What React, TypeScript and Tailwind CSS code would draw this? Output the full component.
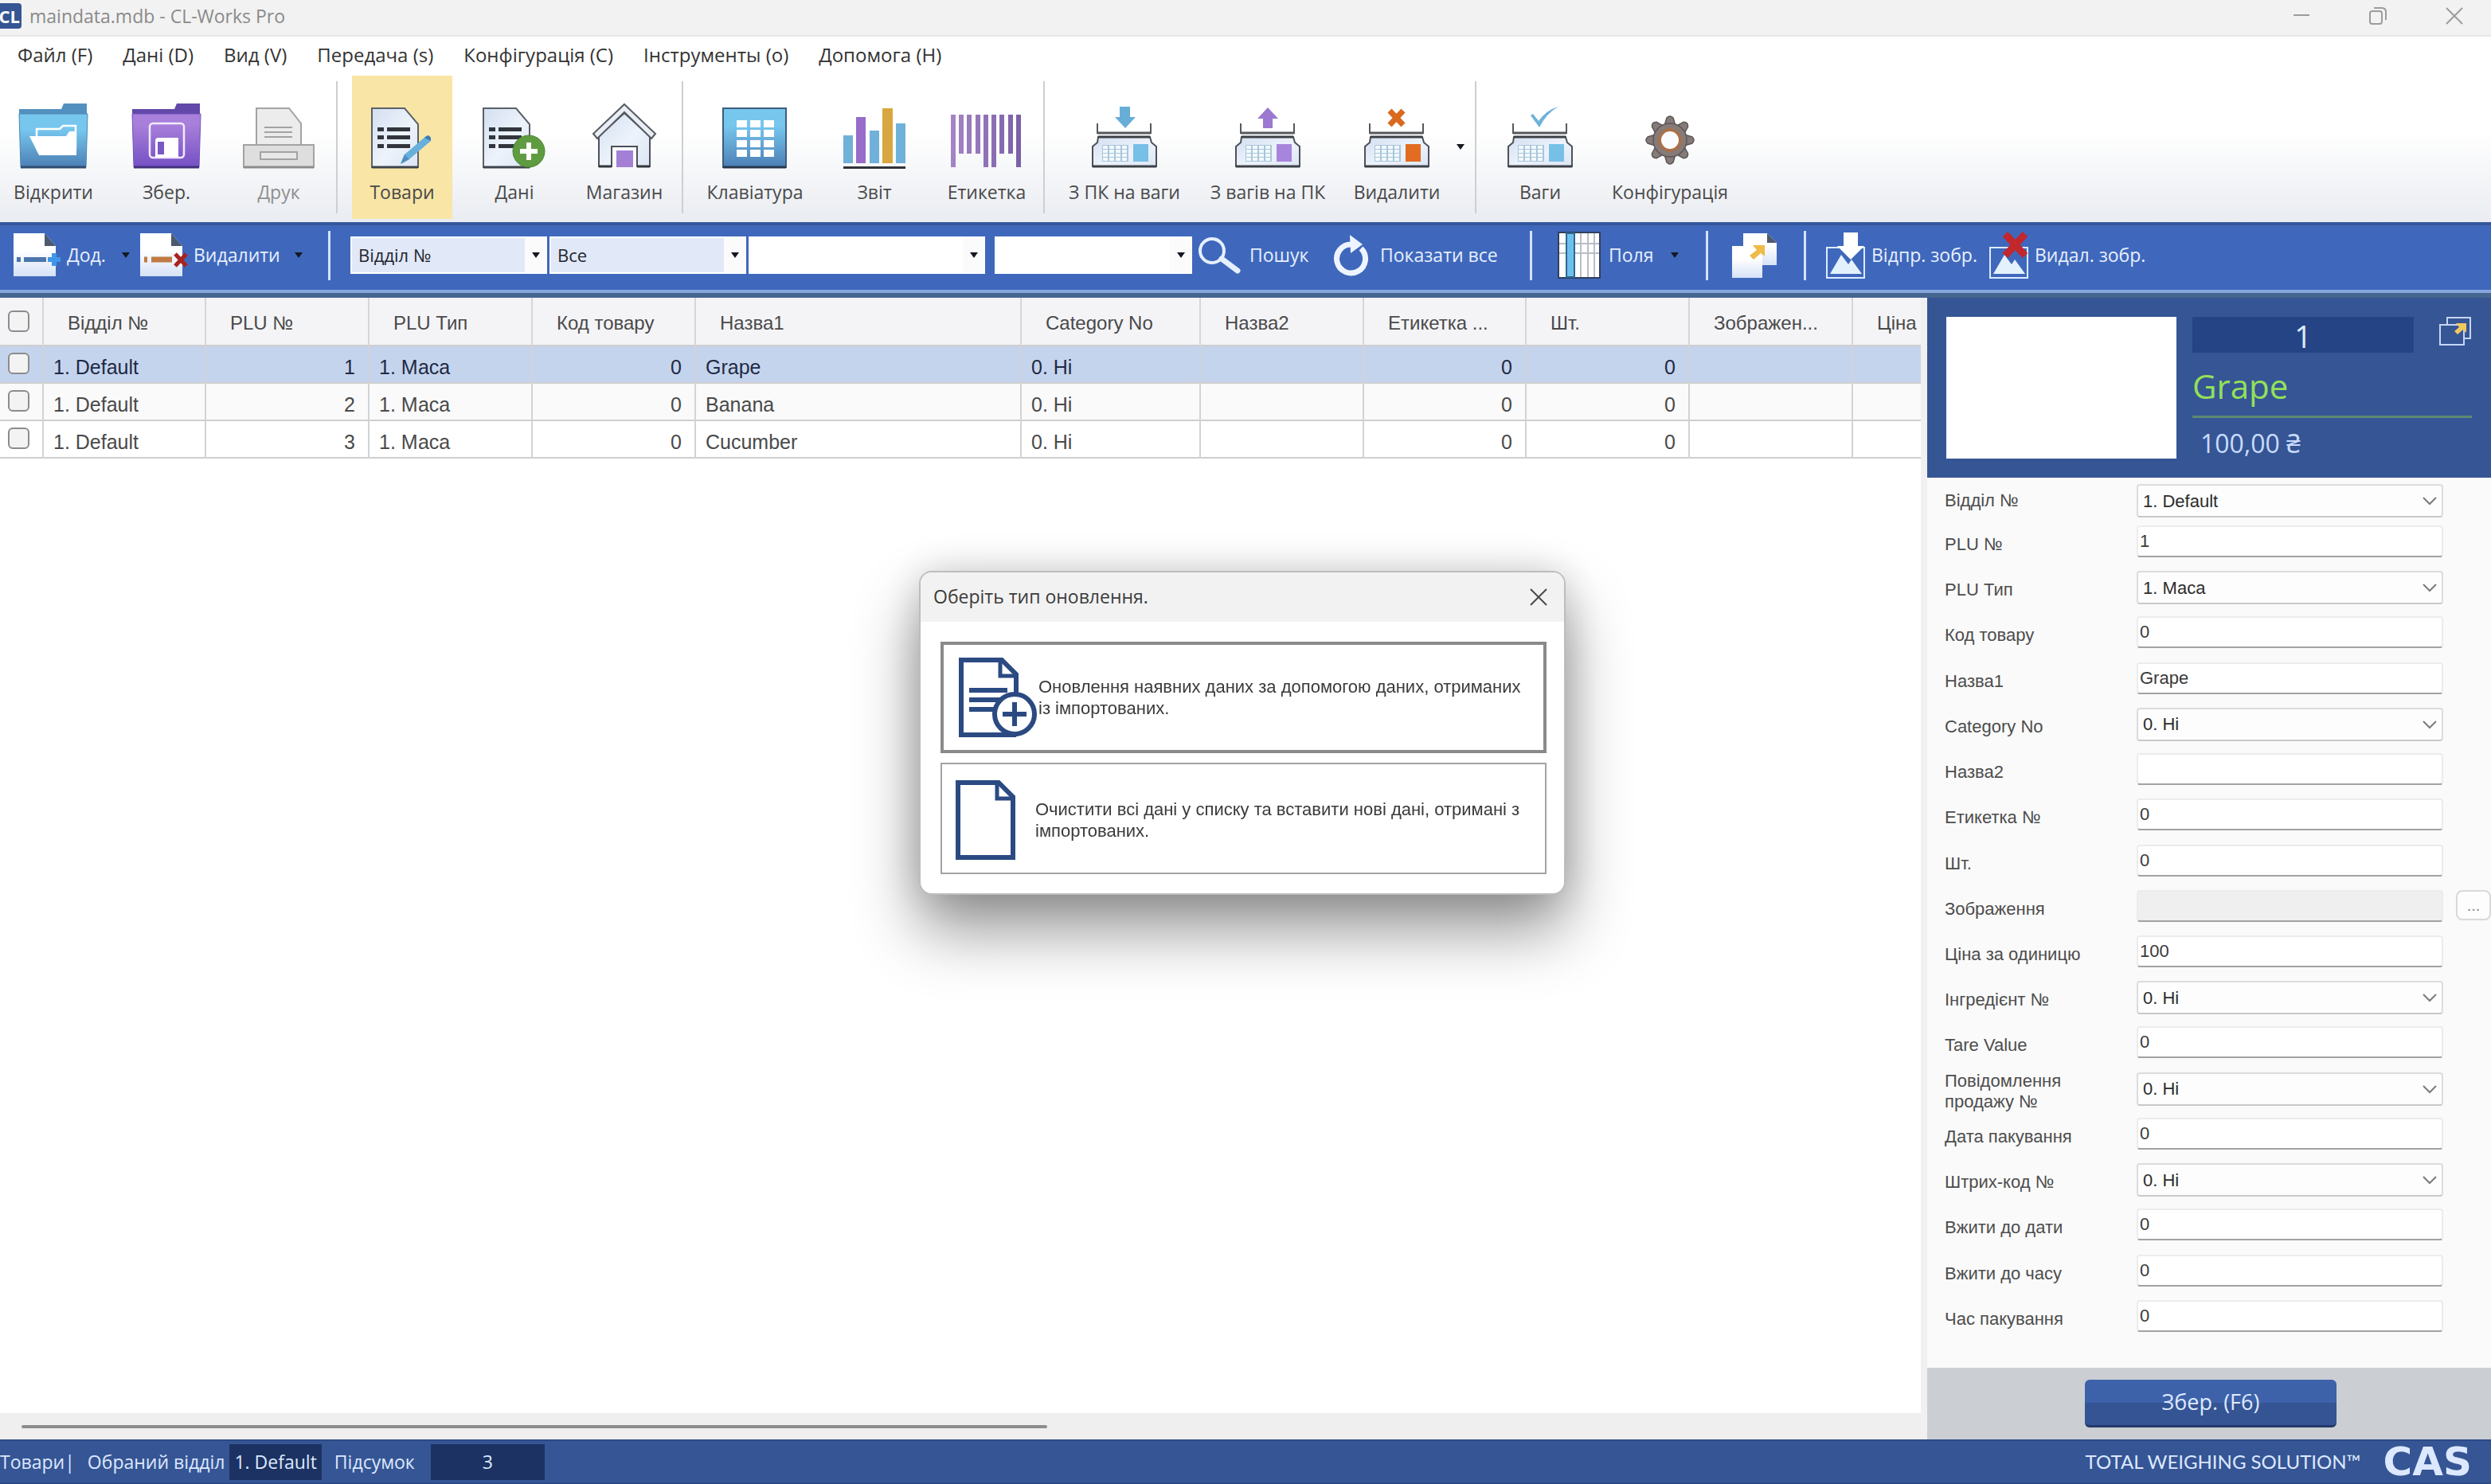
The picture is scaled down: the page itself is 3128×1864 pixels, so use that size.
import React from "react";

const UI = "font-['Open_Sans','Noto_Sans',sans-serif]";
const SANS = "font-['Liberation_Sans',Arial,sans-serif]";

/* ---------- toolbar icons ---------- */

function Gradients() {
  return (
    <svg className="absolute size-0" aria-hidden="true">
      <defs>
        <linearGradient id="blue" x1="0" y1="0" x2="0" y2="1">
          <stop offset="0.3" stopColor="#76c6ee" />
          <stop offset="1" stopColor="#4c7fb5" />
        </linearGradient>
        <linearGradient id="purple" x1="0" y1="0" x2="0" y2="1">
          <stop offset="0.2" stopColor="#a87fdb" />
          <stop offset="1" stopColor="#7450c4" />
        </linearGradient>
        <linearGradient id="paper" x1="0" y1="0" x2="1" y2="1">
          <stop offset="0" stopColor="#d3dff0" />
          <stop offset="0.55" stopColor="#edf3fb" />
          <stop offset="1" stopColor="#dbe5f3" />
        </linearGradient>
        <linearGradient id="bars" x1="0" y1="0" x2="1" y2="0">
          <stop offset="0" stopColor="#a585c4" />
          <stop offset="1" stopColor="#7b5fa8" />
        </linearGradient>
        <linearGradient id="sheet" x1="0" y1="0" x2="0" y2="1">
          <stop offset="0.4" stopColor="#ffffff" />
          <stop offset="1" stopColor="#d6e2f7" />
        </linearGradient>
      </defs>
    </svg>
  );
}

const OpenIcon = () => (
  <svg width="88" height="84" viewBox="0 0 88 84">
    <path d="M1 8H54L57 1H86V20H1Z" fill="#5291bf" />
    <path d="M1 14H87L85 81H3Z" fill="url(#blue)" stroke="#4a87b5" strokeWidth="1" />
    <path d="M3 81H85" stroke="#2f4c70" strokeWidth="3" />
    <path d="M23 42V33H52L56 29H72V58" fill="none" stroke="#fff" strokeWidth="2.5" />
    <path d="M14 42H60L64 36H73V66H26Z" fill="#fff" />
  </svg>
);

const SaveIcon = () => (
  <svg width="88" height="84" viewBox="0 0 88 84">
    <path d="M1 8H54L57 1H86V20H1Z" fill="#6248a8" />
    <path d="M1 14H87L85 81H3Z" fill="url(#purple)" stroke="#7355b8" strokeWidth="1" />
    <path d="M3 81H85" stroke="#43307c" strokeWidth="3" />
    <rect x="23" y="26" width="43" height="43" rx="4" fill="none" stroke="#f2eaff" strokeWidth="2.5" />
    <path d="M30 48Q30 44 34 44H59V68H30Z" fill="#fff" />
    <rect x="33" y="49" width="8" height="16" fill="#7a58c4" />
  </svg>
);

const PrintIcon = () => (
  <svg width="90" height="78" viewBox="0 0 90 78" stroke="#a3a3a3" strokeWidth="2">
    <path d="M17 48V1H58L73 20V48Z" fill="#ececec" />
    <path d="M27 25H62M27 31H62M27 37H62" />
    <rect x="1" y="47" width="88" height="28" fill="#dedede" />
    <path d="M1 75H89" stroke="#8c8c8c" strokeWidth="3" />
    <rect x="22" y="56" width="46" height="9" fill="#e8e8e8" />
  </svg>
);

function DocLines() {
  return (
    <>
      <path d="M1 2H42L59 22V76H1Z" fill="url(#paper)" stroke="#5b6068" strokeWidth="2" />
      <path d="M1 76H59" stroke="#3f444b" strokeWidth="3" />
      <g fill="#32363c">
        <rect x="8" y="26" width="8" height="5" />
        <rect x="20" y="26" width="29" height="5" />
        <rect x="8" y="36" width="8" height="5" />
        <rect x="20" y="36" width="29" height="5" />
        <rect x="8" y="47" width="8" height="5" />
        <rect x="20" y="47" width="29" height="5" />
      </g>
    </>
  );
}

const GoodsIcon = () => (
  <svg width="72" height="79" viewBox="0 0 78 79" className="w-[78px]">
    <DocLines />
    <path d="M37 72L42 60L69 37L75 43L48 66Z" fill="#67b0dc" />
    <path d="M42 60L48 66L37 72Z" fill="#4e8fc0" />
    <path d="M67 39L71 36Q76 37 75 43Z" fill="#3c7db0" />
  </svg>
);

const DataIcon = () => (
  <svg width="80" height="79" viewBox="0 0 80 79">
    <DocLines />
    <circle cx="58" cy="56" r="20" fill="#5f9c41" stroke="#4c8532" strokeWidth="1" />
    <path d="M58 45V67M47 56H69" stroke="#fff" strokeWidth="6" />
  </svg>
);

const StoreIcon = () => (
  <svg width="82" height="84" viewBox="0 0 82 84">
    <path d="M9 42V80H25V55H57V80H73V42L41 13Z" fill="url(#paper)" stroke="#4d5158" strokeWidth="2" />
    <path d="M9 80H25M57 80H73" stroke="#33363b" strokeWidth="3" />
    <path d="M41 2L80 39L75 45L41 12L7 45L2 39Z" fill="#e9eef6" stroke="#555960" strokeWidth="2" />
    <rect x="31" y="60" width="21" height="21" fill="#a380d6" />
  </svg>
);

const KeypadIcon = () => (
  <svg width="82" height="78" viewBox="0 0 82 78">
    <rect x="1" y="1" width="79" height="74" fill="url(#blue)" stroke="#3d5d7c" strokeWidth="2" />
    <path d="M1 75H80" stroke="#26384e" strokeWidth="3" />
    <g fill="#fff">
      {[16, 28, 41, 53].map((y) =>
        [18, 35, 52].map((x) => <rect key={x + "-" + y} x={x} y={y} width="13" height="9" />)
      )}
    </g>
  </svg>
);

const ReportIcon = () => (
  <svg width="80" height="78" viewBox="0 0 80 78">
    <rect x="1" y="35" width="12" height="35" fill="#6fb1d8" />
    <rect x="17" y="12" width="12" height="58" fill="#976dc9" />
    <rect x="34" y="29" width="12" height="41" fill="#6fb1d8" />
    <rect x="50" y="1" width="13" height="69" fill="#d9a740" />
    <rect x="67" y="20" width="12" height="50" fill="#6fb1d8" />
    <rect x="1" y="74" width="78" height="3" fill="#303338" />
  </svg>
);

const LabelIcon = () => (
  <svg width="90" height="70" viewBox="0 0 90 70">
    <path
      d="M0 1h6v66H0ZM10 1h6v49h-6ZM20 1h6v49h-6ZM31 1h6v49h-6ZM41 1h6v66h-6ZM51 1h6v66h-6ZM61 1h6v49h-6ZM72 1h6v49h-6ZM82 1h6v66h-6Z"
      fill="url(#bars)"
    />
  </svg>
);

function ScaleIcon({ accent, children }: { accent: string; children: React.ReactNode }) {
  return (
    <svg width="84" height="80" viewBox="0 0 84 80">
      {children}
      <path d="M8 22V34H75V22" fill="none" stroke="#55585d" strokeWidth="2" />
      <path d="M8 34H75" stroke="#55585d" strokeWidth="3" />
      <path d="M9 39H74L76 46L82 51V76H2V51L8 46Z" fill="url(#paper)" stroke="#4e5258" strokeWidth="2" />
      <path d="M9 39H74M2 76H82" stroke="#3c4046" strokeWidth="3" />
      <rect x="14" y="49" width="33" height="21" fill="#a9c6da" />
      <g fill="#f2f9fd">
        {[50, 55, 60, 65].map((y) =>
          [15, 23, 31, 39].map((x) => <rect key={x + "-" + y} x={x} y={y} width="6" height="4" />)
        )}
      </g>
      <rect x="53" y="48" width="19" height="22" fill={accent} />
    </svg>
  );
}

const ToScale = () => (
  <ScaleIcon accent="#76bfe6">
    <path d="M36 1H49V14H56L43 28L30 14H36Z" fill="#66aed7" />
  </ScaleIcon>
);
const FromScale = () => (
  <ScaleIcon accent="#a885dc">
    <path d="M36 28H48V16H55L42 2L29 16H36Z" fill="#9c78d0" />
  </ScaleIcon>
);
const ClearScale = () => (
  <ScaleIcon accent="#e26c22">
    <path d="M33 6L50 24M50 6L33 24" stroke="#d9691f" strokeWidth="7" />
  </ScaleIcon>
);
const CheckScale = () => (
  <ScaleIcon accent="#76c0e8">
    <path d="M30 12L41 27Q50 9 65 1Q50 5 40 19L33 10Z" fill="#6db2da" />
  </ScaleIcon>
);

const GearIcon = () => (
  <svg width="64" height="62" viewBox="0 0 64 62">
    <g fill="#857b78" stroke="#5d5755" strokeWidth="1.5">
      {[0, 45, 90, 135, 180, 225, 270, 315].map((a) => (
        <path key={a} d="M25 13L28 3Q32 -1 36 3L39 13Z" transform={`rotate(${a} 32 31)`} />
      ))}
      <circle cx="32" cy="31" r="21" />
    </g>
    <circle cx="32" cy="31" r="20" fill="#857b78" />
    <circle cx="32" cy="31" r="13" fill="#fafbfc" stroke="#a7714c" strokeWidth="4" />
  </svg>
);

/* ---------- action bar icons ---------- */

const AddRow = () => (
  <svg width="64" height="60" viewBox="0 0 64 60">
    <path d="M1 2H40L54 18V56H1Z" fill="url(#sheet)" />
    <path d="M40 2L54 18H40Z" fill="#4c5a70" />
    <path d="M5 35H10M14 35H42" stroke="#4c76ad" strokeWidth="6" />
    <path d="M52 27V43M44 35H60" stroke="#3f97e8" strokeWidth="6" />
  </svg>
);

const DeleteRow = () => (
  <svg width="64" height="60" viewBox="0 0 64 60">
    <path d="M1 2H40L54 18V56H1Z" fill="url(#sheet)" />
    <path d="M40 2L54 18H40Z" fill="#4c5a70" />
    <path d="M6 35H10M15 35H41" stroke="#c07a45" strokeWidth="7" />
    <path d="M45 28L59 43M59 28L45 43" stroke="#a8231e" strokeWidth="5" />
  </svg>
);

const SearchIcon = () => (
  <svg width="56" height="48" viewBox="0 0 56 48" fill="none" stroke="#e6efff">
    <circle cx="19" cy="18" r="15" strokeWidth="4" />
    <path d="M31 28L51 43" strokeWidth="7" strokeLinecap="round" />
  </svg>
);

const RefreshIcon = () => (
  <svg width="48" height="54" viewBox="0 0 48 54">
    <path d="M36 18A18 18 0 1 1 24 13" fill="none" stroke="#eef4ff" strokeWidth="7" />
    <path d="M22 1L38 13L23 24Z" fill="#eef4ff" />
  </svg>
);

const FieldsIcon = () => (
  <svg width="54" height="60" viewBox="0 0 54 60">
    <rect x="1" y="1" width="52" height="57" fill="#fff" stroke="#2f3f5c" strokeWidth="2" />
    <path d="M2 15H52M2 27H52M29 2V57M38 2V57M46 2V57" stroke="#b9bec6" strokeWidth="2" />
    <rect x="11" y="2" width="10" height="55" fill="#6dc0ec" stroke="#2e6690" strokeWidth="2" />
  </svg>
);

const PopoutIcon = () => (
  <svg width="60" height="60" viewBox="0 0 60 60">
    <path d="M16 2H46L58 14V42H16Z" fill="url(#sheet)" />
    <path d="M46 2L58 14H46Z" fill="#50596a" />
    <path d="M2 18H40V58H2Z" fill="url(#sheet)" />
    <path d="M24 30L33 23L28 17H43V31L38 27L29 35Z" fill="#edbb48" />
  </svg>
);

const Picture = () => (
  <>
    <rect x="2" y="21" width="47" height="38" fill="none" stroke="#dcecff" strokeWidth="2" />
    <path d="M6 54L20 30L29 42L33 36L46 54Z" fill="#e3f1fc" />
  </>
);

const SendImage = () => (
  <svg width="52" height="61" viewBox="0 0 52 61">
    <Picture />
    <path d="M23 2H41V19H49L32 36L15 19H23Z" fill="#fff" />
  </svg>
);

const DropImage = () => (
  <svg width="52" height="61" viewBox="0 0 52 61">
    <Picture />
    <path d="M21 4L46 31M46 4L21 31" stroke="#c3262b" strokeWidth="9" />
  </svg>
);

const Caret = () => (
  <svg width="10" height="7" viewBox="0 0 10 7" className="shrink-0">
    <path d="M0 0H10L5 7Z" fill="#14181f" />
  </svg>
);

/* ---------- ribbon ---------- */

function Tool({
  icon,
  label,
  width,
  muted,
  active,
}: {
  icon: React.ReactNode;
  label: string;
  width: string;
  muted?: boolean;
  active?: boolean;
}) {
  return (
    <button
      type="button"
      disabled={muted}
      className={
        "flex h-[180px] shrink-0 flex-col items-center justify-end gap-3 pb-[18px] " +
        width +
        (active ? " bg-[#f9e5a6]" : "")
      }
    >
      {icon}
      <span className={"text-[23px] leading-8 whitespace-nowrap " + (muted ? "text-[#8f8f8f]" : "text-[#4a4a4a]")}>
        {label}
      </span>
    </button>
  );
}

const RibbonRule = ({ gap }: { gap: string }) => <div className={"h-[166px] w-[2px] shrink-0 bg-[#cfcfd1] " + gap} />;

function Ribbon() {
  return (
    <div className="flex h-[187px] shrink-0 items-center bg-linear-to-b from-white from-40% to-[#e9ecf1] pb-0.5">
      <Tool icon={<OpenIcon />} label="Відкрити" width="w-[134px]" />
      <Tool icon={<SaveIcon />} label="Збер." width="w-[150px]" />
      <Tool icon={<PrintIcon />} label="Друк" width="w-[132px]" muted />
      <RibbonRule gap="ml-1.5 mr-[18px]" />
      <Tool icon={<GoodsIcon />} label="Товари" width="w-[126px]" active />
      <div className="w-1.5 shrink-0" />
      <Tool icon={<DataIcon />} label="Дані" width="w-[144px]" />
      <Tool icon={<StoreIcon />} label="Магазин" width="w-[132px]" />
      <RibbonRule gap="ml-1.5 mr-2.5" />
      <Tool icon={<KeypadIcon />} label="Клавіатура" width="w-[160px]" />
      <Tool icon={<ReportIcon />} label="Звіт" width="w-[140px]" />
      <Tool icon={<LabelIcon />} label="Етикетка" width="w-[142px]" />
      <RibbonRule gap="mr-2.5" />
      <Tool icon={<ToScale />} label="З ПК на ваги" width="w-[180px]" />
      <Tool icon={<FromScale />} label="З вагів на ПК" width="w-[180px]" />
      <Tool icon={<ClearScale />} label="Видалити" width="w-[144px]" />
      <button type="button" aria-label="Видалити: інші дії" className="flex h-10 w-4 items-center justify-center">
        <Caret />
      </button>
      <RibbonRule gap="mx-2.5" />
      <Tool icon={<CheckScale />} label="Ваги" width="w-[140px]" />
      <Tool
        icon={
          <span className="pb-1.5">
            <GearIcon />
          </span>
        }
        label="Конфігурація"
        width="w-[186px]"
      />
    </div>
  );
}

/* ---------- action bar ---------- */

function BarButton({
  icon,
  label,
  caret,
  className,
}: {
  icon: React.ReactNode;
  label: string;
  caret?: boolean;
  className: string;
}) {
  return (
    <button
      type="button"
      className={"flex h-16 shrink-0 items-center text-[23px] whitespace-nowrap text-[#e8efff] " + className}
    >
      {icon}
      <span>{label}</span>
      {caret && (
        <span className="ml-auto pr-0.5">
          <Caret />
        </span>
      )}
    </button>
  );
}

function BarSelect({ label, value, className }: { label: string; value?: string; className: string }) {
  return (
    <div className={"relative h-[47px] shrink-0 " + className}>
      <select
        aria-label={label}
        className={
          "h-full w-full appearance-none border-2 border-white pl-2 text-[22px] text-[#22262e] " +
          (value ? "bg-[#e1e8f7]" : "bg-white")
        }
      >
        <option>{value ?? ""}</option>
      </select>
      <span className="pointer-events-none absolute inset-y-0.5 right-0 flex w-7 items-center justify-center bg-[#fbfbfb]">
        <Caret />
      </span>
    </div>
  );
}

const BarRule = ({ gap }: { gap: string }) => <div className={"h-[62px] w-[3px] shrink-0 bg-[#d5e1fa] " + gap} />;

function ActionBar() {
  return (
    <div className="shrink-0 border-t-4 border-b-6 border-t-[#35579b] border-b-[#46658f]">
      <div className="flex h-[85px] items-center border-b-4 border-[#86a6de] bg-[#3f68bc] pb-1.5 pl-4">
        <BarButton icon={<AddRow />} label="Дод." caret className="w-[149px] gap-1" />
        <BarButton icon={<DeleteRow />} label="Видалити" caret className="ml-2.5 w-[207px] gap-1" />
        <BarRule gap="ml-[30px] mr-[25px]" />
        <BarSelect label="Поле пошуку" value="Відділ №" className="w-[247px]" />
        <BarSelect label="Значення" value="Все" className="ml-[3px] w-[247px]" />
        <BarSelect label="Умова" className="ml-[3px] w-[297px]" />
        <BarSelect label="Шуканий текст" className="ml-3 w-[248px]" />
        <BarButton icon={<SearchIcon />} label="Пошук" className="ml-[6px] w-[170px] gap-2.5" />
        <BarButton icon={<RefreshIcon />} label="Показати все" className="w-[228px] gap-3" />
        <BarRule gap="ml-5 mr-8" />
        <BarButton icon={<FieldsIcon />} label="Поля" caret className="w-[154px] gap-2.5" />
        <BarRule gap="mx-8" />
        <button type="button" aria-label="Відкрити в окремому вікні" className="-ml-1 shrink-0">
          <PopoutIcon />
        </button>
        <BarRule gap="ml-8 mr-6" />
        <BarButton icon={<SendImage />} label="Відпр. зобр." className="w-[205px] gap-1.5" />
        <BarButton icon={<DropImage />} label="Видал. зобр." className="gap-1.5" />
      </div>
    </div>
  );
}

/* ---------- product table ---------- */

const COLUMNS = [
  { title: "Відділ №", width: "w-[204px]" },
  { title: "PLU №", width: "w-[205px]" },
  { title: "PLU Тип", width: "w-[205px]" },
  { title: "Код товару", width: "w-[205px]" },
  { title: "Назва1", width: "w-[409px]" },
  { title: "Category No", width: "w-[225px]" },
  { title: "Назва2", width: "w-[205px]" },
  { title: "Етикетка ...", width: "w-[204px]" },
  { title: "Шт.", width: "w-[205px]" },
  { title: "Зображен...", width: "w-[205px]" },
  { title: "Ціна", width: "w-[205px]" },
];

const NUMERIC = [1, 3, 7, 8];

const ROWS = [
  ["1. Default", "1", "1. Маса", "0", "Grape", "0. Ні", "", "0", "0", "", ""],
  ["1. Default", "2", "1. Маса", "0", "Banana", "0. Ні", "", "0", "0", "", ""],
  ["1. Default", "3", "1. Маса", "0", "Cucumber", "0. Ні", "", "0", "0", "", ""],
];

const Tick = ({ label }: { label: string }) => (
  <input
    type="checkbox"
    aria-label={label}
    className="ml-2.5 block size-[27px] appearance-none rounded-md border-2 border-[#8c8c8c] bg-[#f3f3f3]"
  />
);

function ProductTable() {
  return (
    <div className={"min-h-0 flex-1 overflow-hidden bg-white " + SANS}>
      <table className="w-[2531px] table-fixed border-collapse text-[24px] text-[#4a4a4a]">
        <thead>
          <tr className="h-[60px] border-b-2 border-[#cfcfcf] bg-[#f4f4f7]">
            <th className="w-[54px] border-r-2 border-[#d6d6d6] p-0">
              <Tick label="Вибрати все" />
            </th>
            {COLUMNS.map((c) => (
              <th
                key={c.title}
                className={"border-r-2 border-[#d6d6d6] p-0 pt-1 pl-[30px] text-left font-normal whitespace-nowrap " + c.width}
              >
                {c.title}
              </th>
            ))}
          </tr>
        </thead>
        <tbody className="text-[25px]">
          {ROWS.map((row, r) => (
            <tr
              key={r}
              className={
                "h-[47px] border-b-2 border-[#cfcfcf] " +
                (r === 0 ? "bg-[#c5d4ed] text-[#1f2a44]" : r === 1 ? "bg-[#fafafa]" : "bg-white")
              }
            >
              <td className="border-r-2 border-[#d0d3d8] p-0 pb-0.5">
                <Tick label={"Вибрати " + row[4]} />
              </td>
              {row.map((cell, i) => (
                <td
                  key={i}
                  className={
                    "border-r-2 border-[#d0d3d8] pt-1.5 pr-4 pb-0 pl-3 leading-9 " +
                    (NUMERIC.includes(i) ? "text-right" : "text-left")
                  }
                >
                  {cell}
                </td>
              ))}
            </tr>
          ))}
        </tbody>
      </table>
    </div>
  );
}

/* ---------- product card ---------- */

type Field = { label: string; value: string; kind: "select" | "text" | "file" };

const FIELDS: Field[] = [
  { label: "Відділ №", value: "1. Default", kind: "select" },
  { label: "PLU №", value: "1", kind: "text" },
  { label: "PLU Тип", value: "1. Маса", kind: "select" },
  { label: "Код товару", value: "0", kind: "text" },
  { label: "Назва1", value: "Grape", kind: "text" },
  { label: "Category No", value: "0. Ні", kind: "select" },
  { label: "Назва2", value: "", kind: "text" },
  { label: "Етикетка №", value: "0", kind: "text" },
  { label: "Шт.", value: "0", kind: "text" },
  { label: "Зображення", value: "", kind: "file" },
  { label: "Ціна за одиницю", value: "100", kind: "text" },
  { label: "Інгредієнт №", value: "0. Ні", kind: "select" },
  { label: "Tare Value", value: "0", kind: "text" },
  { label: "Повідомлення продажу №", value: "0. Ні", kind: "select" },
  { label: "Дата пакування", value: "0", kind: "text" },
  { label: "Штрих-код №", value: "0. Ні", kind: "select" },
  { label: "Вжити до дати", value: "0", kind: "text" },
  { label: "Вжити до часу", value: "0", kind: "text" },
  { label: "Час пакування", value: "0", kind: "text" },
];

function FieldRow({ field, index }: { field: Field; index: number }) {
  const id = "field-" + index;
  return (
    <div className={"flex items-start " + (index === 0 ? "h-[52px] shrink-0" : "flex-1")}>
      <label
        htmlFor={id}
        className={
          "flex w-[241px] shrink-0 items-center pr-16 text-[22px] leading-[26px] text-[#4d4d4d] " +
          (index === 0 ? "h-[42px]" : "h-[48px]")
        }
      >
        {field.label}
      </label>
      {field.kind === "select" ? (
        <div className="relative h-[42px] min-w-0 flex-1">
          <select
            id={id}
            className="h-full w-full appearance-none rounded-sm border-2 border-[#dcdcdc] border-b-[#c9c9c9] bg-[#fdfdfd] pl-1.5 text-[22px] text-[#2c2c2c]"
          >
            <option>{field.value}</option>
          </select>
          <svg width="18" height="11" viewBox="0 0 18 11" className="pointer-events-none absolute top-4 right-2">
            <path d="M1 1L9 9L17 1" fill="none" stroke="#7b7b7b" strokeWidth="2" />
          </svg>
        </div>
      ) : (
        <input
          id={id}
          type="text"
          defaultValue={field.value}
          readOnly={field.kind === "file"}
          className={
            "h-10 min-w-0 flex-1 rounded-sm border-2 border-[#ececec] border-b-[#a2a2a2] pl-0.5 text-[22px] text-[#3a3a3a] " +
            (field.kind === "file" ? "bg-[#efefef]" : "bg-white")
          }
        />
      )}
      <div className="w-[60px] shrink-0 pl-4">
        {field.kind === "file" && (
          <button
            type="button"
            aria-label="Обрати зображення"
            className="h-[38px] w-11 rounded-lg border-2 border-[#d9d9d9] bg-[#fdfdfd] text-[20px] leading-8 text-[#8a8a8a]"
          >
            ...
          </button>
        )}
      </div>
    </div>
  );
}

function ProductCard() {
  return (
    <aside className="flex w-[716px] shrink-0 flex-col border-l-8 border-[#f0f0f0] bg-[#fafafa]">
      <div className="flex h-[226px] shrink-0 items-start gap-5 bg-[#365594] pt-6 pr-6 pl-6">
        <div className="h-[178px] w-[289px] shrink-0 bg-white" />
        <div className={"flex min-w-0 flex-1 flex-col " + UI}>
          <div className="flex items-start justify-between">
            <output className="h-[45px] w-[278px] bg-[#254485] text-center text-[38px] leading-[48px] font-medium text-[#dfeaff]">
              1
            </output>
            <button type="button" aria-label="Відкрити картку в окремому вікні">
              <svg width="42" height="38" viewBox="0 0 42 38" fill="none" stroke="#c4d6f5" strokeWidth="2">
                <path d="M11 9V1H40V27H33" />
                <rect x="2" y="10" width="30" height="25" />
                <path d="M20 18L26 13L22 8H35V20L31 16L24 22Z" fill="#f0c860" stroke="none" />
              </svg>
            </button>
          </div>
          <div className="mt-3 h-[70px] border-b-3 border-[#5d8a72] text-[42px] leading-[60px] text-[#93e05a]">Grape</div>
          <div className="pt-1 pl-2.5 text-[32px] leading-[56px] text-[#c8dcff]">100,00 ₴</div>
        </div>
      </div>
      <form className={"flex min-h-0 flex-1 flex-col pt-2 pb-7 pl-[22px] " + SANS}>
        {FIELDS.map((f, i) => (
          <FieldRow key={f.label} field={f} index={i} />
        ))}
      </form>
      <div className="flex h-[90px] shrink-0 items-center justify-center bg-[#cbcfd3] pl-1">
        <button
          type="button"
          className={
            "h-[60px] w-[316px] rounded-md border-b-3 border-[#24386a] bg-linear-to-b from-[#3d62aa] from-50% to-[#355493] to-50% text-[27px] text-[#dfe9ff] " +
            UI
          }
        >
          Збер. (F6)
        </button>
      </div>
    </aside>
  );
}

/* ---------- update dialog ---------- */

function UpdateDialog() {
  return (
    <div className="fixed inset-0 flex items-center justify-center pr-2 pb-6">
      <div
        role="dialog"
        aria-labelledby="update-title"
        className="w-[812px] overflow-hidden rounded-2xl border-2 border-[#bdbdbd] bg-white shadow-[0_44px_80px_0_rgba(0,0,0,0.42),0_0_50px_0_rgba(0,0,0,0.16)]"
      >
        <header className="flex h-[62px] items-center justify-between bg-[#f2f2f2] pr-5 pl-4">
          <h2 id="update-title" className={"text-[23px] text-[#3c3c3c] " + UI}>
            Оберіть тип оновлення.
          </h2>
          <button type="button" aria-label="Закрити">
            <svg width="24" height="24" viewBox="0 0 24 24">
              <path d="M2 2L22 22M22 2L2 22" stroke="#4a4a4a" strokeWidth="2" />
            </svg>
          </button>
        </header>
        <div className={"flex flex-col gap-3 pt-[25px] pr-[22px] pb-6 pl-[25px] text-[22px] leading-[27px] text-[#3a3a3a] " + SANS}>
          <button
            type="button"
            className="flex h-[140px] items-center border-4 border-[#8a8a8a] pl-[19px] text-left"
          >
            <svg width="100" height="100" viewBox="0 0 100 100" className="shrink-0" fill="none" stroke="#2b4a82">
              <path d="M54 97H3V3H54L72 21V48" strokeWidth="6" />
              <path d="M52 3V23H72" strokeWidth="5" />
              <path d="M13 41H61M13 53H52M13 65H45" strokeWidth="6" />
              <path d="M50 97H72" strokeWidth="6" />
              <circle cx="70" cy="71" r="25" strokeWidth="6" fill="#fff" />
              <path d="M70 56V86M55 71H85" strokeWidth="6" />
            </svg>
            <span>
              Оновлення наявних даних за допомогою даних, отриманих
              <br />
              із імпортованих.
            </span>
          </button>
          <button
            type="button"
            className="flex h-[140px] items-center border-2 border-[#a3a3a3] pt-1 pl-[17px] text-left"
          >
            <svg width="100" height="100" viewBox="0 0 100 100" className="shrink-0" fill="none" stroke="#2b4a82">
              <path d="M3 97V3H54L72 21V97Z" strokeWidth="6" />
              <path d="M52 3V23H72" strokeWidth="5" />
            </svg>
            <span>
              Очистити всі дані у списку та вставити нові дані, отримані з
              <br />
              імпортованих.
            </span>
          </button>
        </div>
      </div>
    </div>
  );
}

/* ---------- window ---------- */

const MENU = ["Файл (F)", "Дані (D)", "Вид (V)", "Передача (s)", "Конфігурація (C)", "Інструменты (o)", "Допомога (H)"];

export default function App() {
  return (
    <div className={"flex h-screen flex-col overflow-hidden bg-white " + UI}>
      <Gradients />
      <header className="flex h-[46px] shrink-0 items-center border-b-2 border-[#e8e8e8] bg-[#f2f2f2] pr-[34px] pb-1">
        <div className="flex h-8 w-[27px] items-center justify-end overflow-hidden rounded-r-sm bg-[#365594] pr-0.5 text-[22px] leading-none font-bold text-white">
          CL
        </div>
        <h1 className="ml-2.5 flex-1 text-[23px] text-[#8a8a8a]">maindata.mdb - CL-Works Pro</h1>
        <div className="flex gap-[72px]">
          <button type="button" aria-label="Згорнути">
            <svg width="24" height="24" viewBox="0 0 24 24" stroke="#9c9c9c" strokeWidth="2">
              <path d="M2 11H22" />
            </svg>
          </button>
          <button type="button" aria-label="Відновити">
            <svg width="24" height="24" viewBox="0 0 24 24" stroke="#9c9c9c" strokeWidth="2" fill="none">
              <rect x="2" y="6" width="15" height="16" rx="3" />
              <path d="M7 2H17Q22 2 22 7V17" />
            </svg>
          </button>
          <button type="button" aria-label="Закрити вікно">
            <svg width="24" height="24" viewBox="0 0 24 24" stroke="#9c9c9c" strokeWidth="2">
              <path d="M2 2L22 22M22 2L2 22" />
            </svg>
          </button>
        </div>
      </header>
      <nav className="flex h-[46px] shrink-0 items-center gap-[38px] pl-[22px]">
        {MENU.map((m) => (
          <button key={m} type="button" className="text-[24px] text-[#333]">
            {m}
          </button>
        ))}
      </nav>
      <Ribbon />
      <ActionBar />
      <main className="flex min-h-0 flex-1">
        <section className="flex min-w-0 flex-1 flex-col">
          <ProductTable />
          <div className="flex h-[33px] shrink-0 items-center bg-[#efefef] pl-[27px]">
            <div className="h-1 w-[54%] rounded-full bg-[#8d8d8d]" />
          </div>
        </section>
        <ProductCard />
      </main>
      <footer className="flex h-14 shrink-0 items-center border-y-2 border-[#2d4a86] bg-[#365594] pr-6 text-[23px] whitespace-nowrap text-[#dce8ff]">
        <span>Товари|</span>
        <span className="ml-4">Обраний відділ</span>
        <span className="ml-1.5 flex h-[45px] items-center bg-[#1c3262] px-1.5">1. Default</span>
        <span className="ml-4">Підсумок</span>
        <span className="ml-5 flex h-[45px] w-[143px] items-center justify-center bg-[#1c3262]">3</span>
        <span className="ml-auto font-['Lato',sans-serif] text-[24px]">TOTAL WEIGHING SOLUTION™</span>
        <span className="ml-7 font-['DejaVu_Sans',sans-serif] text-[50px] leading-none font-bold">CAS</span>
      </footer>
      <UpdateDialog />
    </div>
  );
}
